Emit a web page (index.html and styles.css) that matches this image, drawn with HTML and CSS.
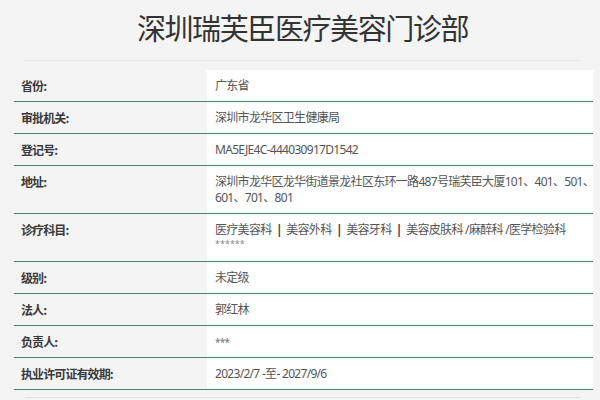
FILE: index.html
```html
<!DOCTYPE html>
<html lang="zh-CN">
<head>
<meta charset="utf-8">
<title>深圳瑞芙臣医疗美容门诊部</title>
<link rel="stylesheet" href="styles.css">
</head>
<body>
<div class="page">
  <header class="head">
    <h1 class="title">深圳瑞芙臣医疗美容门诊部</h1>
  </header>
  <div class="info">
    <div class="row"><div class="label">省份:</div><div class="value">广东省</div></div>
    <div class="row"><div class="label">审批机关:</div><div class="value">深圳市龙华区卫生健康局</div></div>
    <div class="row"><div class="label">登记号:</div><div class="value">MA5EJE4C-444030917D1542</div></div>
    <div class="row"><div class="label">地址:</div><div class="value"><span class="nowrap">深圳市龙华区龙华街道景龙社区东环一路487号瑞芙臣大厦101、401、501、</span><br>601、701、801</div></div>
    <div class="row"><div class="label">诊疗科目:</div><div class="value"><span class="line">医疗美容科 <span class="sep">|</span> 美容外科 <span class="sep">|</span> 美容牙科 <span class="sep">|</span> 美容皮肤科 /麻醉科 /医学检验科</span><span class="stars">******</span></div></div>
    <div class="row"><div class="label">级别:</div><div class="value">未定级</div></div>
    <div class="row"><div class="label">法人:</div><div class="value">郭红林</div></div>
    <div class="row"><div class="label">负责人:</div><div class="value small">***</div></div>
    <div class="row"><div class="label">执业许可证有效期:</div><div class="value">2023/2/7 -至- 2027/9/6</div></div>
  </div>
  <div class="next"></div>
</div>
</body>
</html>
```
FILE: styles.css
```css
html, body {
  margin: 0;
  padding: 0;
  background: #f4f4f4;
  font-family: "Noto Sans", "Noto Sans CJK SC", sans-serif;
}
.page {
  padding: 0 7px 0 14px;
}
.head {
  margin: 0 11px 0 9px;
  height: 60px;
  border-bottom: 1px solid #e8e8e8;
  display: flex;
  align-items: center;
  justify-content: center;
}
.title {
  margin: 0;
  padding-bottom: 6px;
  font-family: "Noto Sans CJK SC", sans-serif;
  font-weight: 400;
  font-size: 29px;
  letter-spacing: -1.4px;
  color: #333;
  line-height: 1;
}
.info {
  margin-top: 9px;
}
.row {
  display: flex;
  border-bottom: 1px solid #4a8466;
}
.label {
  width: 186px;
  flex: none;
  padding: 8px 0 7px 7px;
  font-family: "Noto Sans CJK SC", sans-serif;
  font-weight: 700;
  font-size: 12px;
  letter-spacing: -0.9px;
  line-height: 16px;
  color: #3a3a3a;
}
.value {
  flex: 1;
  min-width: 0;
  background: #fff;
  padding: 8px 4px 7px 8px;
  font-size: 12px;
  letter-spacing: -0.7px;
  line-height: 16px;
  color: #555;
}
.nowrap {
  white-space: nowrap;
}
.line {
  display: block;
}
.sep {
  display: inline-block;
  margin: 0 2px;
  color: #444;
  font-weight: 700;
}
.stars {
  display: block;
  font-size: 9px;
  line-height: 12px;
  padding-bottom: 4px;
  color: #888;
  letter-spacing: 0;
}
.small {
  font-size: 10px;
  color: #777;
}
.next {
  margin: 7px 13px 0 11px;
  height: 4px;
  border-top: 1px solid #dedede;
}
```
